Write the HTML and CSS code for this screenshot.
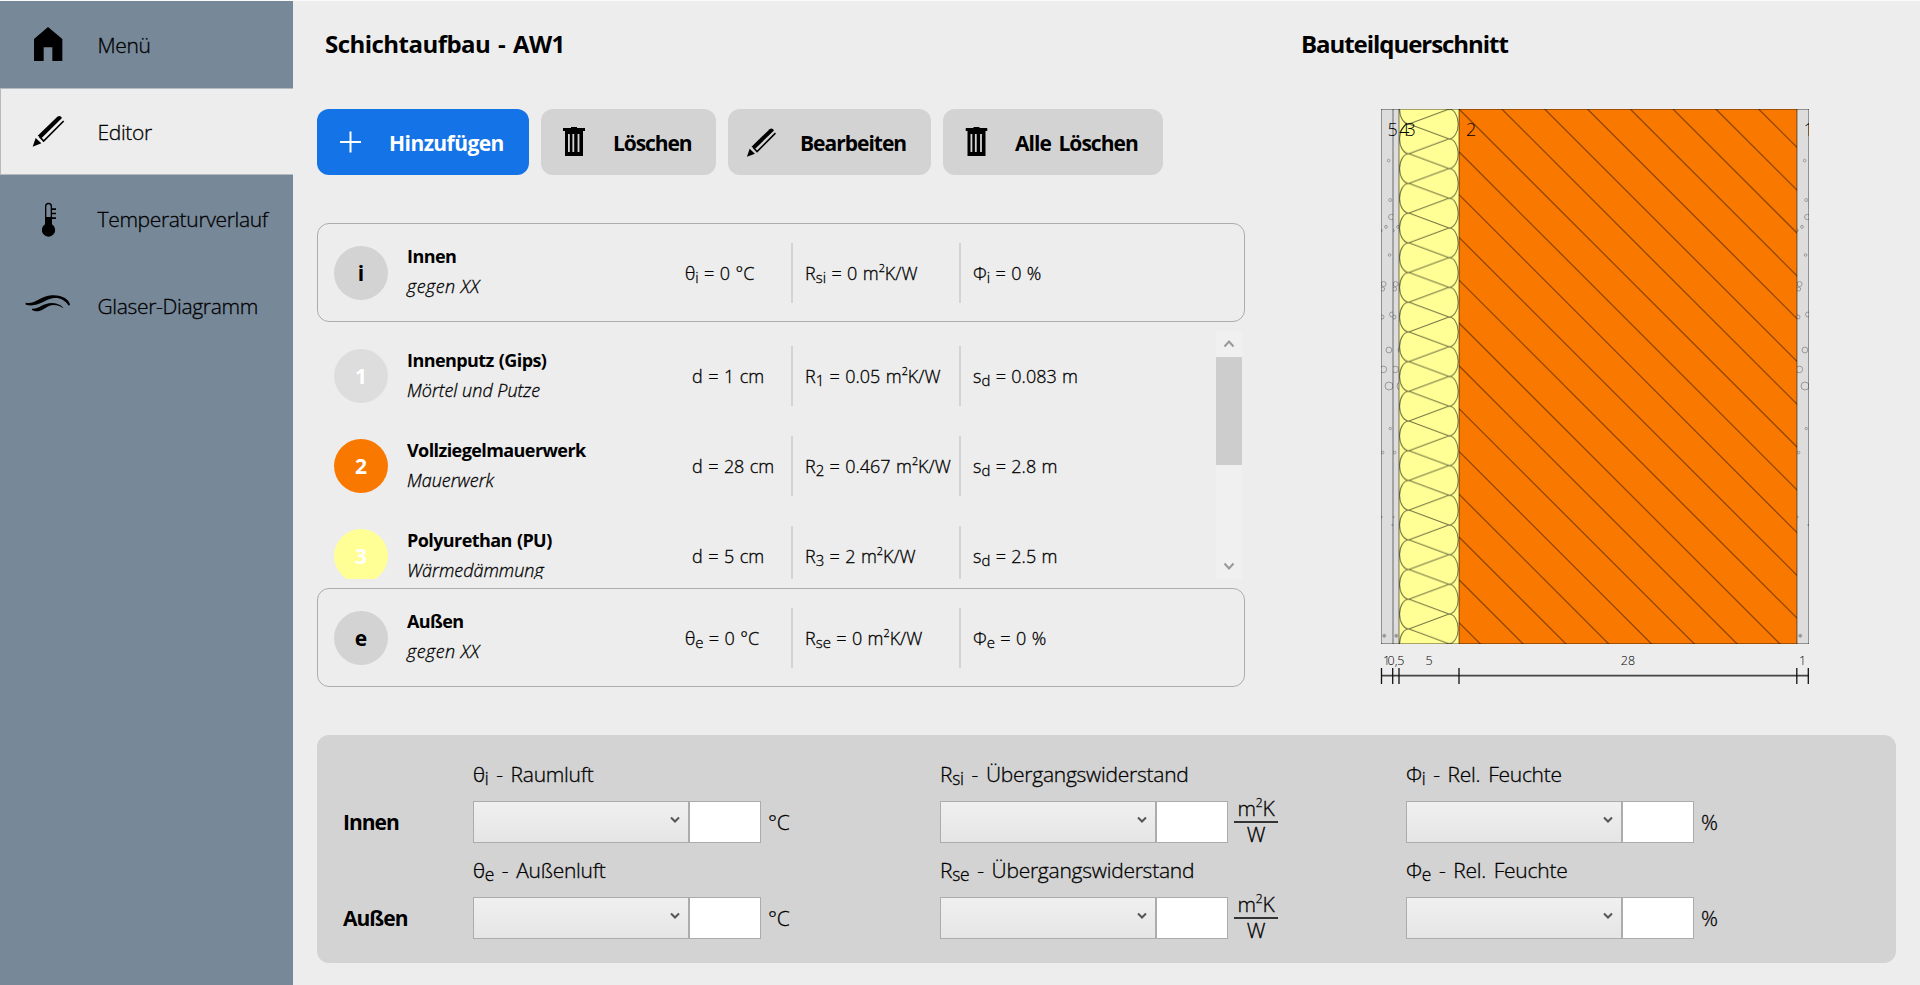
FILE: index.html
```html
<!DOCTYPE html>
<html lang="de">
<head>
<meta charset="utf-8">
<title>Schichtaufbau - AW1</title>
<link rel="stylesheet" href="styles.css">
</head>
<body>
<svg class="defs" width="0" height="0" aria-hidden="true">
  <defs>
    <symbol id="pencil" viewBox="95 343 101 101">
      <path d="M98 440L107 414L124 430Z"/>
      <path d="M113 407L172 350Q178 346 183 350L186 354L125 414Z"/>
      <path d="M118 409L131 423L191 363" fill="none" stroke="#000" stroke-width="5"/>
    </symbol>
    <symbol id="trash" viewBox="0 0 22 29">
      <path fill-rule="evenodd" d="M8 0h6v1h8v3h-2v25H2V4H0V1h8zM5 7v18h1.8V7zM9.4 7v18h1.8V7zM14.6 7v18h1.8V7z"/>
    </symbol>
    <pattern id="wool" x="1399" y="124" width="60" height="29.7" patternUnits="userSpaceOnUse">
      <g fill="none" stroke="#000" stroke-opacity=".55">
        <path d="M10 0A9.4 14.85 0 0 0 10 29.7M50 -14.85A9.2 14.85 0 0 1 50 14.85M50 14.85A9.2 14.85 0 0 1 50 44.55M10 0L50 14.85L10 29.7"/>
      </g>
    </pattern>
  </defs>
</svg>
<div class="app">
  <nav class="sidebar">
    <a class="nav-item"><svg class="nav-icon" viewBox="0 3 294 261"><path d="M144 81L187 117V183H157V142H131V183H102V117Z"/></svg><span>Menü</span></a>
    <a class="nav-item active"><svg class="nav-icon" viewBox="0 264 294 261"><use href="#pencil" x="95" y="343" width="101" height="101"/></svg><span>Editor</span></a>
    <a class="nav-item"><svg class="nav-icon" viewBox="0 525 294 261"><path d="M137 655V619a8.500 8.500 0 0 1 17 0V655" fill="none" stroke="#000" stroke-width="4"/><path d="M135 651H156V673A20 20 0 1 1 135 673ZM154 625h14v5h-14zM154 638h14v5h-14zM154 652h14v5h-14z"/></svg><span>Temperaturverlauf</span></a>
    <a class="nav-item"><svg class="nav-icon" viewBox="0 786 294 261"><path d="M77 908C103 915 120 889 155 886C186 884 207 898 210 914L206 917C194 898 175 891 157 895C130 901 113 923 77 914Z"/><path d="M96 926C117 928 128 909 156 909C174 910 187 917 190 925C175 915 160 913 147 918C130 926 117 941 96 930Z"/></svg><span>Glaser-Diagramm</span></a>
  </nav>
  <main class="content">
    <div class="upper">
      <section class="layers">
        <h1 class="title title-left">Schichtaufbau - AW1</h1>
        <div class="toolbar">
          <button class="btn btn-add"><svg class="btn-icon" viewBox="0 0 73 66"><path d="M23 33H44M33.500 22.500V43.500" stroke="#fff" stroke-width="2"/></svg><span>Hinzufügen</span></button>
          <button class="btn btn-delete"><svg class="btn-icon" viewBox="0 0 73 66"><use href="#trash" x="22" y="18" width="22" height="29"/></svg><span>Löschen</span></button>
          <button class="btn btn-edit"><svg class="btn-icon" viewBox="0 0 73 66"><use href="#pencil" x="18" y="18" width="31" height="31"/></svg><span>Bearbeiten</span></button>
          <button class="btn btn-clear"><svg class="btn-icon" viewBox="0 0 73 66"><use href="#trash" x="22.500" y="18" width="22" height="29"/></svg><span>Alle Löschen</span></button>
        </div>
        <div class="card">
          <div class="row">
            <div class="badge">i</div>
            <div class="names"><b>Innen</b><i>gegen XX</i></div>
            <div class="val-first">θ<sub>i</sub> = 0 °C</div>
            <div class="val">R<sub>si</sub> = 0 m<sup>2</sup>K/W</div>
            <div class="val">Φ<sub>i</sub> = 0 %</div>
          </div>
        </div>
        <div class="list">
          <div class="rows">
            <div class="row">
              <div class="badge plaster">1</div>
              <div class="names"><b>Innenputz (Gips)</b><i class="wide">Mörtel und Putze</i></div>
              <div class="val-first depth">d = 1 cm</div>
              <div class="val">R<sub>1</sub> = 0.05 m<sup>2</sup>K/W</div>
              <div class="val">s<sub>d</sub> = 0.083 m</div>
            </div>
            <div class="row">
              <div class="badge brick">2</div>
              <div class="names"><b>Vollziegelmauerwerk</b><i class="wide">Mauerwerk</i></div>
              <div class="val-first depth">d = 28 cm</div>
              <div class="val">R<sub>2</sub> = 0.467 m<sup>2</sup>K/W</div>
              <div class="val">s<sub>d</sub> = 2.8 m</div>
            </div>
            <div class="row">
              <div class="badge foam">3</div>
              <div class="names"><b>Polyurethan (PU)</b><i class="wide">Wärmedämmung</i></div>
              <div class="val-first depth">d = 5 cm</div>
              <div class="val">R<sub>3</sub> = 2 m<sup>2</sup>K/W</div>
              <div class="val">s<sub>d</sub> = 2.5 m</div>
            </div>
          </div>
          <div class="scrollbar">
            <svg class="arrow" viewBox="0 0 26 26"><path d="M8.500 15.500L13 10.500L17.500 15.500"/></svg>
            <div class="thumb"></div>
            <svg class="arrow arrow-down" viewBox="0 0 26 26"><path d="M8.500 10.500L13 15.500L17.500 10.500"/></svg>
          </div>
        </div>
        <div class="card">
          <div class="row">
            <div class="badge">e</div>
            <div class="names"><b>Außen</b><i>gegen XX</i></div>
            <div class="val-first">θ<sub>e</sub> = 0 °C</div>
            <div class="val">R<sub>se</sub> = 0 m<sup>2</sup>K/W</div>
            <div class="val">Φ<sub>e</sub> = 0 %</div>
          </div>
        </div>
      </section>
      <section class="section-view">
        <h1 class="title title-right">Bauteilquerschnitt</h1>
        <svg class="drawing" viewBox="1375 109 440 580">
          <defs>
            <g id="grains" fill="none" stroke="#999">
              <circle cx="7.600" cy="160.600" r="1.300"/><circle cx="9.300" cy="200" r="1.500"/><circle cx="10.300" cy="217" r="2.700"/>
              <circle cx="5" cy="226.800" r="1.400"/><circle cx=".3" cy="230.500" r="1"/><circle cx="8.600" cy="255" r="1.300"/>
              <circle cx="2.600" cy="284" r="2.500"/><circle cx="1.600" cy="289" r="2"/><circle cx="1" cy="317" r="2"/>
              <circle cx="11" cy="314.500" r="2.500"/><circle cx="7.900" cy="350" r="2.900"/><circle cx="2.300" cy="369.400" r="3.300"/>
              <circle cx="8" cy="386" r="4"/><circle cx="9.300" cy="428.500" r="1.200"/><circle cx="1.600" cy="452.500" r="1.300"/>
              <circle cx=".6" cy="517" r=".6"/><circle cx="11.300" cy="525" r=".6"/><circle cx="3.300" cy="635.800" r="1.500" fill="#999"/>
            </g>
            <clipPath id="c12"><path d="M0 109H12V644H0Z"/></clipPath>
            <clipPath id="c6"><path d="M0 109H6V644H0Z"/></clipPath>
            <clipPath id="cb"><path d="M1459 109H1797V644H1459Z"/></clipPath>
            <clipPath id="cr"><path d="M1797 109H1809V644H1797Z"/></clipPath>
          </defs>
          <path d="M1381 109H1399V644H1381ZM1797 109H1809V644H1797Z" fill="#ddd"/>
          <g transform="translate(1381 0)" clip-path="url(#c12)"><use href="#grains"/></g>
          <g transform="translate(1393 0)" clip-path="url(#c6)"><use href="#grains"/></g>
          <g transform="translate(1797 0)" clip-path="url(#c12)"><use href="#grains"/></g>
          <path d="M1399 109H1459V644H1399Z" fill="#ffff95"/>
          <path d="M1399 109H1459V644H1399Z" fill="url(#wool)"/>
          <path d="M1459 109H1797V644H1459Z" fill="#f97800"/>
          <g clip-path="url(#cb)"><path stroke="#000" stroke-opacity=".42" stroke-width="1.300" d="M1459 109l540 540M1501.800 109l540 540M1544.600 109l540 540M1587.400 109l540 540M1630.200 109l540 540M1673 109l540 540M1715.800 109l540 540M1758.600 109l540 540M1459 151.800l540 540M1459 194.600l540 540M1459 237.400l540 540M1459 280.200l540 540M1459 323l540 540M1459 365.800l540 540M1459 408.600l540 540M1459 451.400l540 540M1459 494.200l540 540M1459 537l540 540M1459 579.800l540 540M1459 622.600l540 540"/></g>
          <g fill="none" stroke="#000" stroke-opacity=".35">
            <path d="M1381.500 109V644M1381 109.500H1809M1381 643.500H1809M1808.500 109V644"/>
            <path d="M1393 109V644M1399 109V644M1459 109V644M1797 109V644" stroke-width="1.500"/>
          </g>
          <g class="layer-no">
            <text x="1387.500" y="136">5</text><text x="1399" y="136">4</text><text x="1405.500" y="136">3</text><text x="1466" y="136">2</text>
            <text x="1803.500" y="136" clip-path="url(#cr)">1</text>
          </g>
          <g class="dim">
            <text x="1386.500" y="664.500">1</text><text x="1396" y="664.500">0,5</text><text x="1429" y="664.500">5</text><text x="1628" y="664.500">28</text><text x="1802.500" y="664.500">1</text>
          </g>
          <path d="M1381 675.700H1809" stroke="#444" stroke-width="1.800"/>
          <path d="M1381.500 668V684M1392.700 668V684M1399 668V684M1459 668V684M1796.800 668V684M1808.300 668V684" stroke="#111" stroke-width="1.300"/>
        </svg>
      </section>
    </div>
    <section class="panel">
      <div class="label">θ<sub>i</sub> - Raumluft</div>
      <div class="label">R<sub>si</sub> - Übergangswiderstand</div>
      <div class="label">Φ<sub>i</sub> - Rel. Feuchte</div>
      <div class="side">Innen</div>
      <div class="field"><div class="combo"><svg viewBox="0 0 10 8"><path d="M1 1.500L5 5.500L9 1.500"/></svg></div><div class="box"></div><span class="unit">°C</span></div>
      <div class="field"><div class="combo"><svg viewBox="0 0 10 8"><path d="M1 1.500L5 5.500L9 1.500"/></svg></div><div class="box"></div><div class="frac"><span>m<sup>2</sup>K</span><span class="den">W</span></div></div>
      <div class="field"><div class="combo"><svg viewBox="0 0 10 8"><path d="M1 1.500L5 5.500L9 1.500"/></svg></div><div class="box"></div><span class="unit">%</span></div>
      <div class="label">θ<sub>e</sub> - Außenluft</div>
      <div class="label">R<sub>se</sub> - Übergangswiderstand</div>
      <div class="label">Φ<sub>e</sub> - Rel. Feuchte</div>
      <div class="side">Außen</div>
      <div class="field"><div class="combo"><svg viewBox="0 0 10 8"><path d="M1 1.500L5 5.500L9 1.500"/></svg></div><div class="box"></div><span class="unit">°C</span></div>
      <div class="field"><div class="combo"><svg viewBox="0 0 10 8"><path d="M1 1.500L5 5.500L9 1.500"/></svg></div><div class="box"></div><div class="frac"><span>m<sup>2</sup>K</span><span class="den">W</span></div></div>
      <div class="field"><div class="combo"><svg viewBox="0 0 10 8"><path d="M1 1.500L5 5.500L9 1.500"/></svg></div><div class="box"></div><span class="unit">%</span></div>
    </section>
  </main>
</div>
</body>
</html>
```
FILE: styles.css
```css
* { box-sizing: border-box; }
body {
  margin: 0;
  background: #ededed;
  color: #000;
  font-family: "Open Sans", "Noto Sans", sans-serif;
  font-weight: 300;
  -webkit-text-stroke: 0.3px currentColor;
}
.defs { display: block; }
.app {
  display: flex;
  height: 985px;
  border-top: 1px solid #fafafa;
  overflow: hidden;
}
.sidebar { width: 293px; background: #778899; flex: none; }
.nav-item {
  display: flex;
  align-items: center;
  height: 87px;
  font-size: 21px;
  letter-spacing: -0.33px;
}
.nav-icon { width: 98px; height: 87px; flex: none; }
.nav-item span { margin-left: -0.5px; }
.nav-item.active { background: #ededed; box-shadow: inset 1px 1px #b5babf, inset 0 -1px #b5babf; }

.content { flex: 1; padding: 0 24px; }
.upper { display: flex; height: 734px; }
.layers { width: 928px; flex: none; }
.title {
  margin: 0;
  height: 108px;
  padding-top: 23px;
  line-height: 40px;
  font-size: 24px;
  font-weight: 700;
  -webkit-text-stroke: 0;
}
.title-left { padding-left: 8px; letter-spacing: -0.53px; word-spacing: 2px; }
.title-right { margin-left: -19px; letter-spacing: -1.05px; }

.toolbar { display: flex; gap: 12px; height: 66px; margin-bottom: 48px; }
.btn {
  display: flex;
  align-items: center;
  padding: 0;
  border: 0;
  border-radius: 12px;
  background: #d3d3d3;
  color: #000;
  font: 700 21px "Open Sans", "Noto Sans", sans-serif;
  letter-spacing: -1px;
  white-space: nowrap;
  -webkit-text-stroke: 0;
}
.btn span { padding-top: 2px; margin-left: -1px; }
.btn-icon { width: 73px; height: 66px; flex: none; }
.btn-add { width: 212px; background: #1473e6; color: #fff; letter-spacing: -0.55px; }
.btn-delete { width: 175px; letter-spacing: -1.1px; }
.btn-edit { width: 203px; }
.btn-clear { width: 220px; letter-spacing: -0.95px; word-spacing: 3px; }

.card {
  height: 99px;
  border: 1px solid #acacac;
  border-radius: 12px;
  padding: 4px 0 0 16px;
}
.row {
  display: grid;
  grid-template-columns: 73px 278px 107px 168px 1fr;
  align-items: center;
  height: 90px;
  font-size: 18px;
  white-space: nowrap;
}
.badge {
  width: 54px;
  height: 54px;
  border-radius: 50%;
  background: #d3d3d3;
  font-size: 21px;
  font-weight: 700;
  line-height: 54px;
  text-align: center;
  -webkit-text-stroke: 0;
}
.plaster { background: #ddd; color: #fff; }
.brick { background: #f97800; color: #fff; }
.foam { background: #ffff95; color: #fff; }
.names { display: flex; flex-direction: column; line-height: 30px; padding-bottom: 2px; }
.card .names { padding-bottom: 4px; }
.names b { font-weight: 700; letter-spacing: -0.58px; word-spacing: 1px; -webkit-text-stroke: 0; }
.names i { letter-spacing: 0.45px; }
.names i.wide { letter-spacing: 0; }
.val-first { letter-spacing: -0.1px; word-spacing: 1px; }
.depth { padding-left: 7px; }
.val {
  height: 60px;
  line-height: 60px;
  padding-left: 12px;
  border-left: 2px solid #d3d3d3;
  margin-left: -1px;
  word-spacing: 0.7px;
}
sub, sup { line-height: 0; }
sub { font-size: 0.83em; vertical-align: -2.5px; }
sup { font-size: 0.6em; vertical-align: 8px; }

.list { display: flex; height: 248px; margin: 9px 0; overflow: hidden; }
.rows { flex: 1; padding-left: 17px; }
.scrollbar { width: 26px; margin-right: 3px; background: #f0f0f0; display: flex; flex-direction: column; }
.arrow { width: 26px; height: 26px; fill: none; stroke: #999; stroke-width: 2; }
.arrow-down { margin-top: auto; }
.thumb { height: 108px; background: #cdcdcd; }

.section-view { flex: 1; padding-left: 75px; }
.drawing { display: block; width: 440px; height: 580px; margin-left: 55px; }
.layer-no { font-size: 18px; }
.dim { font-size: 12.5px; text-anchor: middle; }

.panel {
  display: grid;
  grid-template-columns: 130px 467px 466px 1fr;
  grid-template-rows: 54px 42px 54px 42px;
  align-items: center;
  width: 1579px;
  height: 228px;
  padding: 12px 0 0 26px;
  border-radius: 12px;
  background: #d3d3d3;
  font-size: 21px;
}
.label { letter-spacing: -0.25px; word-spacing: 2.6px; white-space: nowrap; }
.label:nth-child(1), .label:nth-child(8) { grid-column: 2; }
.side { font-weight: 700; letter-spacing: -1px; -webkit-text-stroke: 0; }
.field { display: flex; height: 42px; align-items: center; }
.combo {
  display: flex;
  justify-content: flex-end;
  align-items: center;
  width: 216px;
  height: 42px;
  padding: 0 8px 4px 0;
  border: 1px solid #acacac;
  background: linear-gradient(#f0f0f0, #e5e5e5);
}
.combo svg { width: 10px; height: 8px; fill: none; stroke: #555; stroke-width: 2; }
.box { width: 72px; height: 42px; background: #fff; border: 1px solid #acacac; }
.unit { margin-left: 7px; letter-spacing: -0.3px; }
.frac { display: flex; flex-direction: column; width: 44px; margin-left: 6px; text-align: center; line-height: 22px; letter-spacing: -0.2px; }
.frac span { height: 24px; }
.frac .den { height: 26px; border-top: 2px solid #333; }
.frac sup { font-size: 12px; vertical-align: 9px; }
```
